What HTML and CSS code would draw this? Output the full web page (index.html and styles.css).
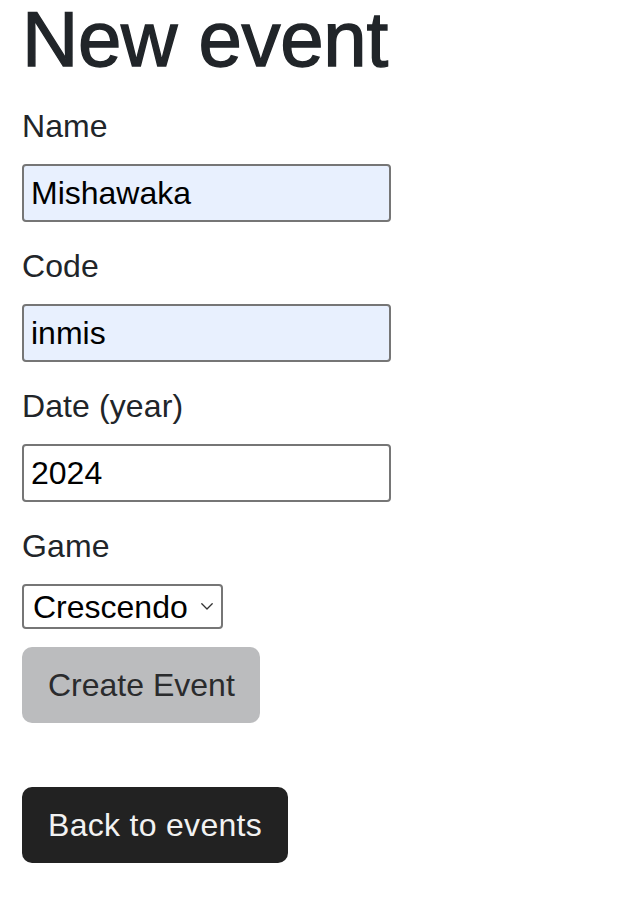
FILE: index.html
```html
<!DOCTYPE html>
<html lang="en">
<head>
<meta charset="utf-8">
<title>New event</title>
<link rel="stylesheet" href="styles.css">
</head>
<body>
<main class="page">
  <h1 class="title">New event</h1>
  <form class="event-form">
    <div class="field">
      <label class="field-label" for="name">Name</label>
      <input class="field-input autofilled" id="name" type="text" value="Mishawaka">
    </div>
    <div class="field">
      <label class="field-label" for="code">Code</label>
      <input class="field-input autofilled" id="code" type="text" value="inmis">
    </div>
    <div class="field">
      <label class="field-label" for="year">Date (year)</label>
      <input class="field-input" id="year" type="text" value="2024">
    </div>
    <div class="field">
      <label class="field-label" for="game">Game</label>
      <span class="select-wrap">
        <select class="field-select" id="game">
          <option>Crescendo</option>
        </select>
        <svg class="select-chevron" width="12" height="7" viewBox="0 0 12 7" aria-hidden="true">
          <path d="M0.8 0.8 L6 6 L11.2 0.8" fill="none" stroke="#333" stroke-width="1.3" stroke-linecap="round" stroke-linejoin="round"/>
        </svg>
      </span>
    </div>
    <div class="actions">
      <button class="btn btn-create" type="button">Create Event</button>
    </div>
  </form>
  <div class="back-row">
    <a class="btn btn-back" href="#">Back to events</a>
  </div>
</main>
</body>
</html>
```

FILE: styles.css
```css
html, body {
  margin: 0;
  padding: 0;
  background: #ffffff;
}

body {
  font-family: "Liberation Sans", Arial, sans-serif;
  color: #212529;
}

.page {
  padding: 0 22px;
}

.title {
  margin: 0;
  font-size: 78px;
  line-height: 78px;
  font-weight: 400;
  color: #212529;
  -webkit-text-stroke: 1.4px #212529;
  letter-spacing: -0.3px;
}

.event-form {
  display: flex;
  flex-direction: column;
  align-items: flex-start;
  margin-top: 24px;
}

.field {
  display: flex;
  flex-direction: column;
  align-items: flex-start;
  margin-bottom: 20px;
}

.field-label {
  font-size: 32px;
  line-height: 48px;
  color: #212529;
  margin-bottom: 14px;
  letter-spacing: 0.1px;
}

.field-input {
  box-sizing: border-box;
  width: 369px;
  height: 58px;
  margin: 0;
  padding: 0 7px;
  border: 2px solid #767676;
  border-radius: 4px;
  background: #ffffff;
  font-family: "Liberation Sans", Arial, sans-serif;
  font-size: 32px;
  color: #000000;
  outline: none;
}

.field-input.autofilled {
  background: #e8f0fe;
}

.select-wrap {
  position: relative;
  display: inline-block;
}

.field-select {
  -webkit-appearance: none;
  appearance: none;
  box-sizing: border-box;
  width: 201px;
  height: 45px;
  margin: 0;
  padding: 0 0 0 9px;
  border: 2px solid #767676;
  border-radius: 4px;
  background: #ffffff;
  font-family: "Liberation Sans", Arial, sans-serif;
  font-size: 32px;
  color: #000000;
  outline: none;
}

.select-chevron {
  position: absolute;
  right: 10px;
  top: 19px;
  pointer-events: none;
}

.actions {
  margin-top: -2px;
}

.btn {
  display: inline-block;
  box-sizing: border-box;
  height: 76px;
  padding: 0 25px;
  border: 0;
  border-radius: 10px;
  font-family: "Liberation Sans", Arial, sans-serif;
  font-size: 32px;
  line-height: 76px;
  text-decoration: none;
  cursor: pointer;
}

.btn-create {
  background: #bbbcbe;
  color: #2a2b2d;
  padding: 0 25px 0 26px;
}

.back-row {
  margin-top: 64px;
}

.btn-back {
  background: #222222;
  color: #f2f2f2;
  padding: 0 26px;
  letter-spacing: 0.3px;
}
```
